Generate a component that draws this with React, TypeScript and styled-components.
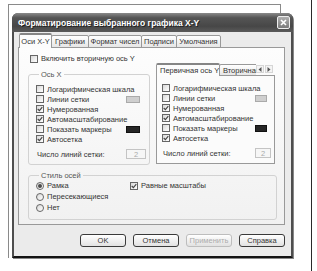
import styled, { createGlobalStyle } from "styled-components";

const GlobalStyle = createGlobalStyle`
  html, body { margin: 0; padding: 0; background: #fff; }
  body { font-family: "Liberation Sans", Arial, sans-serif; color: #333; }
  * { box-sizing: border-box; }
`;

const Page = styled.div`
  width: 312px;
  height: 271px;
  border-right: 1px solid #2a2a2a;
  padding: 4px 0 0 8px;
`;

// окно позади диалога, видно только его край
const BackFrame = styled.div`
  width: 273px;
  height: 254px;
  border: 1px solid #8a8a8a;
  border-bottom: 0;
  padding: 8px 0 0 3px;
`;

const Dialog = styled.div`
  width: 281px;
  height: 245px;
  background: #ebebeb;
  border: 2px solid #4e4e4e;
  border-bottom-color: #141414;
  border-radius: 6px 6px 0 0;
  display: flex;
  flex-direction: column;
  box-shadow: 1px 1px 0 #888;
`;

const TitleBar = styled.div`
  height: 19px;
  margin: -2px -2px 0 -2px;
  padding: 0 3px 0 6px;
  border-radius: 6px 6px 0 0;
  background: linear-gradient(#8a8a8a, #555 25%, #474747 70%, #5a5a5a);
  display: flex;
  align-items: center;
  justify-content: space-between;
`;

const Title = styled.span`
  color: #fff;
  font-weight: bold;
  font-size: 8.5px;
  text-shadow: 1px 1px 0 #222;
  white-space: nowrap;
`;

const CloseButton = styled.div`
  width: 13px;
  height: 13px;
  border: 1px solid #eee;
  border-radius: 2px;
  background: linear-gradient(#b0b0b0, #7a7a7a);
  display: flex;
  align-items: center;
  justify-content: center;
`;

const Body = styled.div`
  flex: 1;
  padding: 2px 4px 0 4px;
`;

const TabStrip = styled.div`
  display: flex;
  align-items: flex-end;
  height: 14px;
  padding-left: 1px;
  margin-bottom: -1px;
  position: relative;
  z-index: 1;
`;

const Tab = styled.div<{ $w: number; $active?: boolean; $h?: number }>`
  width: ${(p) => p.$w}px;
  height: ${(p) => (p.$active ? (p.$h ?? 14) + 1 : p.$h ?? 13)}px;
  flex: none;
  margin-right: -1px;
  border: 1px solid #999;
  border-bottom: ${(p) => (p.$active ? "0" : "1px solid #999")};
  border-top: ${(p) => (p.$active ? "2px solid #858585" : "1px solid #999")};
  border-radius: 2px 2px 0 0;
  background: ${(p) => (p.$active ? "#fcfcfc" : "linear-gradient(#fff, #e6e6e6)")};
  font-size: 7.5px;
  display: flex;
  align-items: center;
  justify-content: ${(p) => (p.$h ? "flex-start" : "center")};
  padding-left: ${(p) => (p.$h ? 3 : 0)}px;
  white-space: nowrap;
  overflow: hidden;
  position: relative;
  z-index: ${(p) => (p.$active ? 2 : 1)};
`;

const Panel = styled.div`
  width: 267px;
  height: 178px;
  border: 1px solid #999;
  background: linear-gradient(#fdfdfd, #f1f1f1);
  padding: 6px 0 0 9px;
`;

const Row = styled.div<{ $h?: number; $gap?: number }>`
  display: flex;
  align-items: center;
  height: ${(p) => p.$h ?? 10}px;
  margin-top: ${(p) => p.$gap ?? 0}px;
  font-size: 7.5px;
  white-space: nowrap;
`;

const Label = styled.span`
  flex: 1;
  margin-left: 3px;
`;

const TopRow = styled(Row)`
  padding-left: 2px;
`;

const Columns = styled.div`
  display: flex;
  gap: 6px;
  align-items: flex-start;
`;

const Group = styled.fieldset<{ $w: number; $top: number }>`
  width: ${(p) => p.$w}px;
  margin: ${(p) => p.$top}px 0 0 0;
  padding: 5px 3px 5px 7px;
  border: 1px solid #d2d2d2;
  border-radius: 3px;
  min-width: 0;
`;

const Legend = styled.legend`
  padding: 0 2px;
  margin-left: 3px;
  font-size: 7.5px;
  line-height: 9px;
  color: #555;
`;

const Box = styled.span`
  width: 8px;
  height: 8px;
  flex: none;
  border: 1px solid #666;
  background: linear-gradient(135deg, #d8d8d8, #fff);
  display: inline-flex;
  align-items: center;
  justify-content: center;
`;

const Round = styled(Box)`
  border-radius: 50%;
`;

const Dot = styled.span`
  width: 4px;
  height: 4px;
  border-radius: 50%;
  background: #4a4a4a;
`;

const Trailer = styled.div<{ $w: number }>`
  width: ${(p) => p.$w}px;
  flex: none;
  display: flex;
`;

const Swatch = styled.span<{ $w: number; $dark?: boolean }>`
  width: ${(p) => p.$w}px;
  height: 7px;
  border: 1px solid ${(p) => (p.$dark ? "#111" : "#aaa")};
  background: ${(p) => (p.$dark ? "#262626" : "#cfcfcf")};
`;

const NumberBox = styled.div`
  width: 100%;
  height: 10px;
  border: 1px solid #c4c4c4;
  background: #f6f6f6;
  color: #aaa;
  font-size: 7.5px;
  display: flex;
  align-items: center;
  justify-content: center;
`;

const AxisTabs = styled.div`
  width: 119px;
`;

const AxisStrip = styled.div`
  display: flex;
  align-items: flex-end;
  height: 13px;
  margin-bottom: -1px;
  position: relative;
  z-index: 1;
`;

const Clip = styled.div`
  display: flex;
  align-items: flex-end;
  width: 100px;
  overflow: hidden;
`;

const Arrows = styled.div`
  display: flex;
  gap: 1px;
  margin-bottom: 3px;
`;

const ArrowBtn = styled.div`
  width: 8px;
  height: 8px;
  border: 1px solid #d6d6d6;
  background: #f4f4f4;
  display: flex;
  align-items: center;
  justify-content: center;
`;

const AxisPanel = styled.div`
  height: 89px;
  border: 1px solid #999;
  background: #fbfbfb;
  padding: 7px 3px 0 5px;
`;

const StyleCols = styled.div`
  display: flex;
`;

const StyleCol = styled.div<{ $w?: number }>`
  width: ${(p) => (p.$w ? `${p.$w}px` : "auto")};
  display: flex;
  flex-direction: column;
`;

const Buttons = styled.div`
  display: flex;
  justify-content: flex-end;
  gap: 7px;
  margin-top: 9px;
  width: 267px;
`;

const Button = styled.div<{ $disabled?: boolean }>`
  width: 46px;
  height: 13px;
  border: 1px solid ${(p) => (p.$disabled ? "#bdbdbd" : "#3a3a3a")};
  border-radius: 3px;
  background: linear-gradient(#fff, #e2e2e2);
  color: ${(p) => (p.$disabled ? "#ababab" : "#333")};
  font-size: 7.5px;
  display: flex;
  align-items: center;
  justify-content: center;
`;

const Check = ({ on }: { on?: boolean }) => (
  <Box>
    {on && (
      <svg width="6" height="6" viewBox="0 0 6 6">
        <path d="M0.7 3 L2.4 4.7 L5.3 1.1" fill="none" stroke="#444" strokeWidth="1.1" />
      </svg>
    )}
  </Box>
);

const Radio = ({ on }: { on?: boolean }) => <Round>{on && <Dot />}</Round>;

type Opt = { text: string; on?: boolean; swatch?: "light" | "dark" };

const options: Opt[] = [
  { text: "Логарифмическая шкала" },
  { text: "Линии сетки", swatch: "light" },
  { text: "Нумерованная", on: true },
  { text: "Автомасштабирование", on: true },
  { text: "Показать маркеры", swatch: "dark" },
  { text: "Автосетка", on: true },
];

const AxisOptions = ({ trail, sw }: { trail: number; sw: number }) => (
  <>
    {options.map((o) => (
      <Row key={o.text}>
        <Check on={o.on} />
        <Label>{o.text}</Label>
        <Trailer $w={trail}>
          {o.swatch && <Swatch $w={sw} $dark={o.swatch === "dark"} />}
        </Trailer>
      </Row>
    ))}
    <Row $gap={5}>
      <Label style={{ marginLeft: 1 }}>Число линий сетки:</Label>
      <Trailer $w={trail}>
        <NumberBox>2</NumberBox>
      </Trailer>
    </Row>
  </>
);

export default function App() {
  return (
    <>
      <GlobalStyle />
      <Page>
        <BackFrame>
          <Dialog>
            <TitleBar>
              <Title>Форматирование выбранного графика X-Y</Title>
              <CloseButton>
                <svg width="7" height="7" viewBox="0 0 7 7">
                  <path d="M1 1 L6 6 M6 1 L1 6" stroke="#fff" strokeWidth="1.6" />
                </svg>
              </CloseButton>
            </TitleBar>
            <Body>
              <TabStrip>
                <Tab $w={33} $active>Оси X-Y</Tab>
                <Tab $w={38}>Графики</Tab>
                <Tab $w={54}>Формат чисел</Tab>
                <Tab $w={36}>Подписи</Tab>
                <Tab $w={45}>Умолчания</Tab>
              </TabStrip>
              <Panel>
                <TopRow $h={9}>
                  <Check />
                  <Label>Включить вторичную ось Y</Label>
                </TopRow>
                <Columns>
                  <Group $w={122} $top={7}>
                    <Legend>Ось X</Legend>
                    <AxisOptions trail={20} sw={14} />
                  </Group>
                  <AxisTabs>
                    <AxisStrip>
                      <Clip>
                        <Tab $w={64} $h={12} $active>Первичная ось Y</Tab>
                        <Tab $w={60} $h={12}>Вторичная ось Y</Tab>
                      </Clip>
                      <Arrows>
                        <ArrowBtn>
                          <svg width="4" height="5" viewBox="0 0 4 5">
                            <path d="M3.5 0 L0.5 2.5 L3.5 5 Z" fill="#555" />
                          </svg>
                        </ArrowBtn>
                        <ArrowBtn>
                          <svg width="4" height="5" viewBox="0 0 4 5">
                            <path d="M0.5 0 L3.5 2.5 L0.5 5 Z" fill="#555" />
                          </svg>
                        </ArrowBtn>
                      </Arrows>
                    </AxisStrip>
                    <AxisPanel>
                      <AxisOptions trail={16} sw={12} />
                    </AxisPanel>
                  </AxisTabs>
                </Columns>
                <Group $w={249} $top={6} style={{ paddingTop: 0, paddingBottom: 6 }}>
                  <Legend>Стиль осей</Legend>
                  <StyleCols>
                    <StyleCol $w={94}>
                      <Row $h={11}>
                        <Radio on />
                        <Label>Рамка</Label>
                      </Row>
                      <Row $h={11}>
                        <Radio />
                        <Label>Пересекающиеся</Label>
                      </Row>
                      <Row $h={11}>
                        <Radio />
                        <Label>Нет</Label>
                      </Row>
                    </StyleCol>
                    <StyleCol>
                      <Row $h={11}>
                        <Check on />
                        <Label>Равные масштабы</Label>
                      </Row>
                    </StyleCol>
                  </StyleCols>
                </Group>
              </Panel>
              <Buttons>
                <Button>OK</Button>
                <Button>Отмена</Button>
                <Button $disabled>Применить</Button>
                <Button>Справка</Button>
              </Buttons>
            </Body>
          </Dialog>
        </BackFrame>
      </Page>
    </>
  );
}
